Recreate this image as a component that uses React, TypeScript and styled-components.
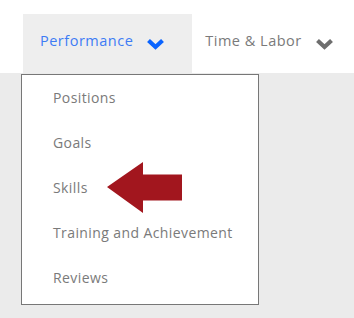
import React from 'react'
import styled, { createGlobalStyle } from 'styled-components'

const GlobalStyle = createGlobalStyle`
  html, body {
    margin: 0;
    padding: 0;
    background: #ebebeb;
    font-family: 'Open Sans', 'Noto Sans', sans-serif;
  }
`

const Page = styled.div`
  position: relative;
  width: 354px;
  height: 318px;
  overflow: hidden;
  background: #ebebeb;
`

const Nav = styled.nav`
  background: #fff;
  display: flex;
  height: 59px;
  padding: 14px 0 0 23px;
`

const Tab = styled.div<{ $active?: boolean }>`
  align-items: center;
  background: ${(p) => (p.$active ? '#eeeeee' : 'transparent')};
  color: ${(p) => (p.$active ? '#3d7cf5' : '#7a7a7a')};
  display: flex;
  font-size: 14.5px;
  gap: 13px;
  letter-spacing: 0.5px;
  padding: 0 ${(p) => (p.$active ? '27px' : '0')} 7px ${(p) => (p.$active ? '17px' : '13px')};
`

const Chevron = styled.svg`
  margin-top: 7px;
`

const Menu = styled.ul`
  background: #fff;
  border: 1px solid #777;
  box-sizing: border-box;
  height: 231px;
  left: 21px;
  list-style: none;
  margin: 0;
  padding: 0;
  position: absolute;
  top: 74px;
  width: 238px;
`

const MenuItem = styled.li`
  align-items: center;
  color: #7a7a7a;
  display: flex;
  font-size: 14px;
  height: 45px;
  letter-spacing: 0.4px;
  padding-left: 31px;
`

const Pointer = styled.svg`
  left: 107px;
  position: absolute;
  top: 161px;
`

const ChevronIcon = ({ color }: { color: string }) => (
  <Chevron width="19" height="12" viewBox="0 0 19 12">
    <polyline points="2.5,2.5 9.5,9 16.5,2.5" fill="none" stroke={color} strokeWidth="4.2" strokeLinejoin="miter" />
  </Chevron>
)

const items = ['Positions', 'Goals', 'Skills', 'Training and Achievement', 'Reviews']

export default function App() {
  return (
    <Page>
      <GlobalStyle />
      <Nav>
        <Tab $active>
          Performance
          <ChevronIcon color="#0a64ff" />
        </Tab>
        <Tab>
          Time &amp; Labor
          <ChevronIcon color="#6e6e6e" />
        </Tab>
      </Nav>
      <Menu>
        {items.map((item) => (
          <MenuItem key={item}>{item}</MenuItem>
        ))}
      </Menu>
      <Pointer width="76" height="53" viewBox="0 0 76 53">
        <polygon points="0,26 36,1 36,13.5 75,13.5 75,39.5 36,39.5 36,52" fill="#a2161e" />
      </Pointer>
    </Page>
  )
}
